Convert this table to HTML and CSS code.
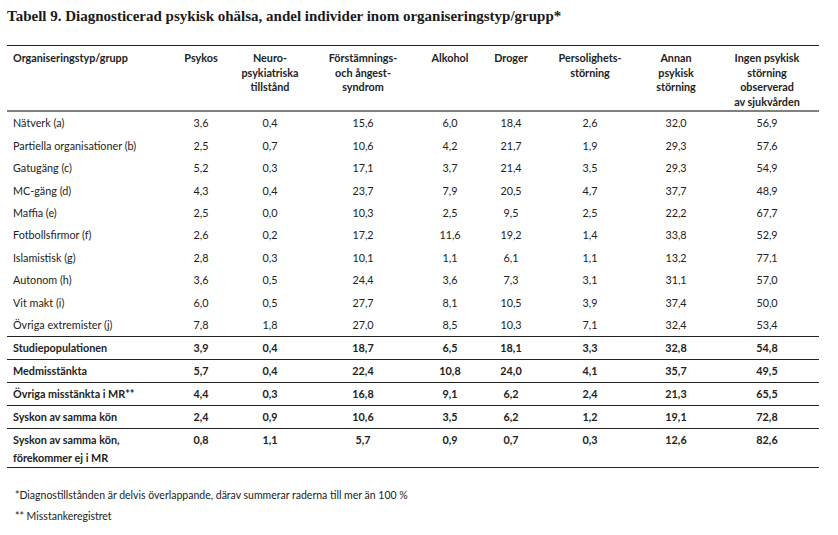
FILE: index.html
```html
<!DOCTYPE html>
<html lang="sv">
<head>
<meta charset="utf-8">
<title>Tabell 9</title>
<link rel="stylesheet" href="styles.css">
</head>
<body>
<div class="page">
  <h1 class="title">Tabell 9. Diagnosticerad psykisk ohälsa, andel individer inom organiseringstyp/grupp*</h1>
  <table class="tbl">
    <colgroup>
      <col class="c-name"><col class="c-psy"><col class="c-neu"><col class="c-for"><col class="c-alk"><col class="c-dro"><col class="c-per"><col class="c-ann"><col class="c-ing">
    </colgroup>
    <thead>
      <tr>
        <th class="name">Organiseringstyp/grupp</th>
        <th>Psykos</th>
        <th>Neuro-<br>psykiatriska<br>tillstånd</th>
        <th>Förstämnings-<br>och ångest-<br>syndrom</th>
        <th>Alkohol</th>
        <th>Droger</th>
        <th>Persolighets-<br>störning</th>
        <th>Annan<br>psykisk<br>störning</th>
        <th>Ingen psykisk<br>störning<br>observerad<br>av sjukvården</th>
      </tr>
    </thead>
    <tbody class="groups">
      <tr><td class="name">Nätverk (a)</td><td>3,6</td><td>0,4</td><td>15,6</td><td>6,0</td><td>18,4</td><td>2,6</td><td>32,0</td><td>56,9</td></tr>
      <tr><td class="name">Partiella organisationer (b)</td><td>2,5</td><td>0,7</td><td>10,6</td><td>4,2</td><td>21,7</td><td>1,9</td><td>29,3</td><td>57,6</td></tr>
      <tr><td class="name">Gatugäng (c)</td><td>5,2</td><td>0,3</td><td>17,1</td><td>3,7</td><td>21,4</td><td>3,5</td><td>29,3</td><td>54,9</td></tr>
      <tr><td class="name">MC-gäng (d)</td><td>4,3</td><td>0,4</td><td>23,7</td><td>7,9</td><td>20,5</td><td>4,7</td><td>37,7</td><td>48,9</td></tr>
      <tr><td class="name">Maffia (e)</td><td>2,5</td><td>0,0</td><td>10,3</td><td>2,5</td><td>9,5</td><td>2,5</td><td>22,2</td><td>67,7</td></tr>
      <tr><td class="name">Fotbollsfirmor (f)</td><td>2,6</td><td>0,2</td><td>17,2</td><td>11,6</td><td>19,2</td><td>1,4</td><td>33,8</td><td>52,9</td></tr>
      <tr><td class="name">Islamistisk (g)</td><td>2,8</td><td>0,3</td><td>10,1</td><td>1,1</td><td>6,1</td><td>1,1</td><td>13,2</td><td>77,1</td></tr>
      <tr><td class="name">Autonom (h)</td><td>3,6</td><td>0,5</td><td>24,4</td><td>3,6</td><td>7,3</td><td>3,1</td><td>31,1</td><td>57,0</td></tr>
      <tr><td class="name">Vit makt (i)</td><td>6,0</td><td>0,5</td><td>27,7</td><td>8,1</td><td>10,5</td><td>3,9</td><td>37,4</td><td>50,0</td></tr>
      <tr><td class="name">Övriga extremister (j)</td><td>7,8</td><td>1,8</td><td>27,0</td><td>8,5</td><td>10,3</td><td>7,1</td><td>32,4</td><td>53,4</td></tr>
    </tbody>
    <tbody class="totals">
      <tr><td class="name">Studiepopulationen</td><td>3,9</td><td>0,4</td><td>18,7</td><td>6,5</td><td>18,1</td><td>3,3</td><td>32,8</td><td>54,8</td></tr>
      <tr><td class="name">Medmisstänkta</td><td>5,7</td><td>0,4</td><td>22,4</td><td>10,8</td><td>24,0</td><td>4,1</td><td>35,7</td><td>49,5</td></tr>
      <tr><td class="name">Övriga misstänkta i MR**</td><td>4,4</td><td>0,3</td><td>16,8</td><td>9,1</td><td>6,2</td><td>2,4</td><td>21,3</td><td>65,5</td></tr>
      <tr><td class="name">Syskon av samma kön</td><td>2,4</td><td>0,9</td><td>10,6</td><td>3,5</td><td>6,2</td><td>1,2</td><td>19,1</td><td>72,8</td></tr>
      <tr class="tall"><td class="name">Syskon av samma kön,<br>förekommer ej i MR</td><td>0,8</td><td>1,1</td><td>5,7</td><td>0,9</td><td>0,7</td><td>0,3</td><td>12,6</td><td>82,6</td></tr>
    </tbody>
  </table>
  <div class="notes">
    <p>*Diagnostillstånden är delvis överlappande, därav summerar raderna till mer än 100 %</p>
    <p>** Misstankeregistret</p>
  </div>
</div>
</body>
</html>
```

FILE: styles.css
```css
html, body {
  margin: 0;
  padding: 0;
  background: #ffffff;
}

.page {
  padding: 7px 0 0 7px;
  width: 812px;
  color: #222222;
  font-family: "Lato", "Open Sans", sans-serif;
  font-size: 10.5px;
}

.title {
  margin: 0;
  font-family: "Liberation Serif", "DejaVu Serif", serif;
  font-weight: bold;
  font-size: 15px;
  line-height: 18px;
  color: #1a1a1a;
}

.tbl {
  margin-top: 20px;
  width: 812px;
  border-collapse: collapse;
  table-layout: fixed;
  font-size: 10.8px;
}

.c-name { width: 160px; }
.c-psy { width: 68px; }
.c-neu { width: 70px; }
.c-for { width: 116px; }
.c-alk { width: 58px; }
.c-dro { width: 64px; }
.c-per { width: 94px; }
.c-ann { width: 78px; }
.c-ing { width: 104px; }

.tbl th {
  font-weight: bold;
  text-align: center;
  vertical-align: top;
  line-height: 14.6px;
  padding: 5px 0 1px;
  border-top: 1px solid #222;
  border-bottom: 2px solid #808080;
}

.tbl td {
  text-align: center;
  padding: 0;
  vertical-align: top;
}

.tbl .name {
  text-align: left;
  padding-left: 6px;
}

.groups td {
  height: 22.4px;
  line-height: 22.4px;
}

.totals td {
  font-weight: bold;
  height: 22px;
  line-height: 22px;
  border-top: 1px solid #222;
}

.totals tr:last-child td {
  border-bottom: 1px solid #222;
}

.totals .tall td {
  line-height: 18px;
  height: 36px;
  padding-top: 2px;
}

.notes {
  margin-top: 17px;
  padding-left: 8px;
}

.notes p {
  margin: 0;
  line-height: 21px;
}
```
